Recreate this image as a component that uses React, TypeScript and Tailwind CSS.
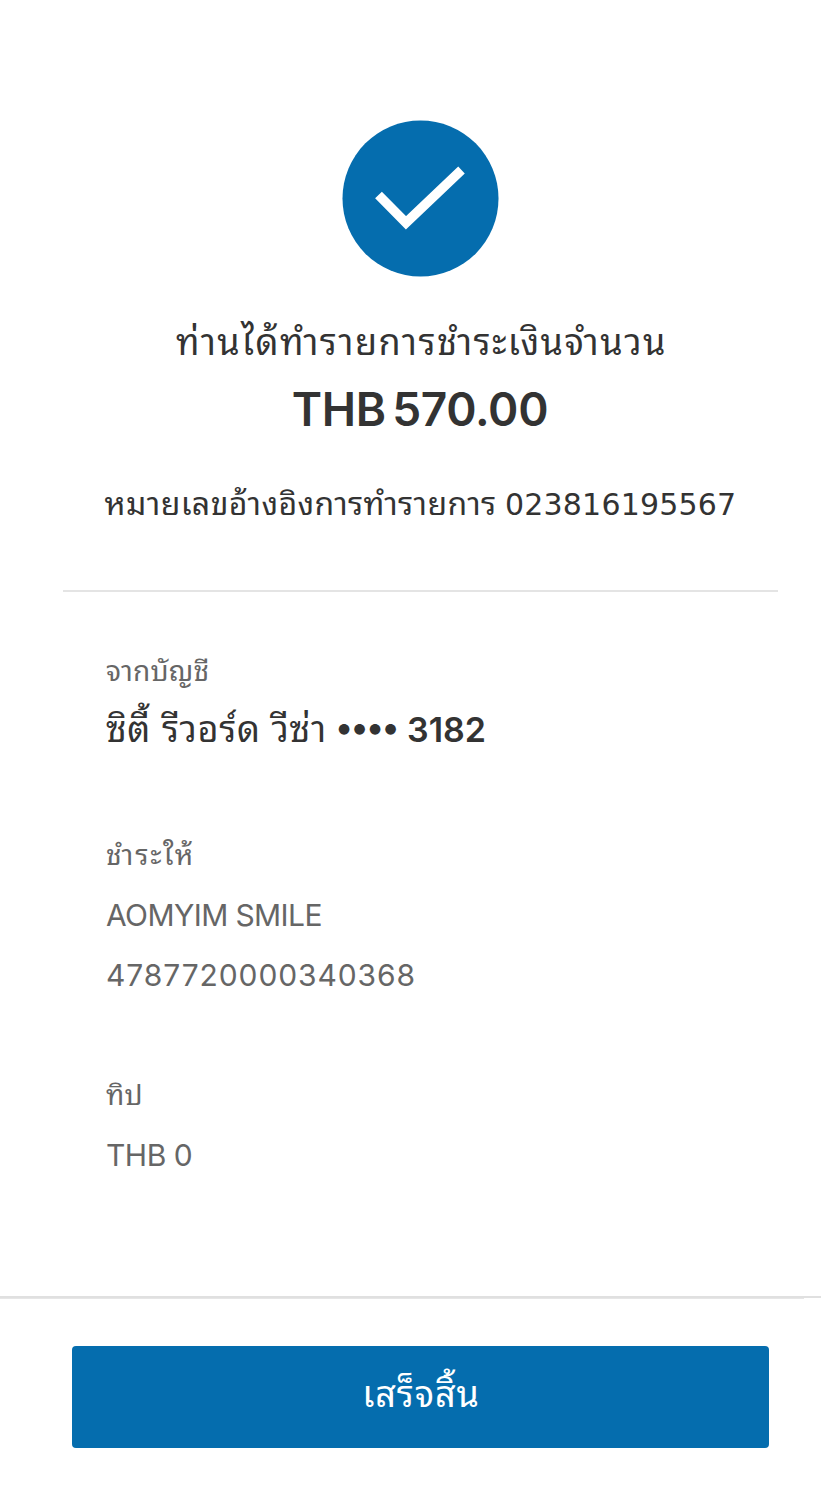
import React from 'react';

interface DetailProps {
    label: string;
    labelClass?: string;
    children: React.ReactNode;
}

const Detail: React.FC<DetailProps> = ({ label, labelClass = 'tracking-[0.2px]', children }) => (
    <div>
        <p className={`text-[28px] leading-[40px] ${labelClass}`}>{label}</p>
        {children}
    </div>
);

export default function App() {
    return (
        <div className="flex flex-col w-[840px] h-[1496px] bg-white text-[#666666] font-['Inter','Noto_Sans_Thai_Looped','Loma','Waree','Garuda','Noto_Sans',sans-serif]">
            <main className="flex flex-col h-[1296px] px-[63px]">
                {/* Confirmation header */}
                <div className="flex flex-col items-center h-[590px] pt-[120px] text-[#333333] whitespace-nowrap">
                    <svg className="w-[157px] h-[157px]" viewBox="0 0 157 157">
                        <circle cx="78.5" cy="78.5" r="78" fill="#056DAE" />
                        <path d="M36.5 75 64 102.8 119.5 50" fill="none" stroke="white" strokeWidth="9.5" />
                    </svg>
                    <h1 className="mt-[41px] pl-[3px] text-[36px] leading-[48px] tracking-[1.5px]">ท่านได้ทำรายการชำระเงินจำนวน</h1>
                    <p className="mt-[17px] text-[46px] leading-[52px] font-semibold tracking-[-0.3px] [word-spacing:-5px]">THB 570.00</p>
                    <p className="mt-[45px] pl-px text-[30px] leading-[48px]">
                        <span className="text-[32px] tracking-[0.4px]">หมายเลขอ้างอิงการทำรายการ</span>{' '}
                        <span className="font-['DejaVu_Sans'] tracking-[0.2px]">023816195567</span>
                    </p>
                </div>
                <hr className="w-[715px] border-t-2 border-[#e4e4e4]" />
                {/* Payment details */}
                <div className="flex flex-col px-[43px] pt-[59px]">
                    <Detail label="จากบัญชี">
                        <p className="mt-4 text-[34px] leading-[44px] font-semibold text-[#333333]">
                            <span className="text-[36px] font-normal tracking-[0.7px]">ซิตี้ รีวอร์ด วีซ่า</span>{' '}
                            <span className="relative -top-[3px] tracking-[-1.6px]">••••</span>{' '}
                            <span className="ml-px">3182</span>
                        </p>
                    </Detail>
                    <div className="mt-[83px]">
                        <Detail label="ชำระให้" labelClass="tracking-[1.8px]">
                            <p className="mt-5 text-[30px] leading-[40px] tracking-[-0.6px]">AOMYIM SMILE</p>
                            <p className="mt-5 text-[30px] leading-[40px] tracking-[0.9px]">4787720000340368</p>
                        </Detail>
                    </div>
                    <div className="mt-20">
                        <Detail label="ทิป">
                            <p className="mt-5 text-[30px] leading-[40px] tracking-[-0.5px]">THB 0</p>
                        </Detail>
                    </div>
                </div>
            </main>
            <footer className="h-[200px]">
                <div className="w-[821px] h-0.5 bg-[#e0e0e0]"></div>
                <div className="w-[804px] h-px bg-[#e6e6e6]"></div>
                <button className="mt-[47px] ml-[72px] w-[697px] h-[102px] rounded bg-[#056DAE] pb-1.5 pl-px text-[36px] tracking-[0.9px] text-white">เสร็จสิ้น</button>
            </footer>
        </div>
    );
}
